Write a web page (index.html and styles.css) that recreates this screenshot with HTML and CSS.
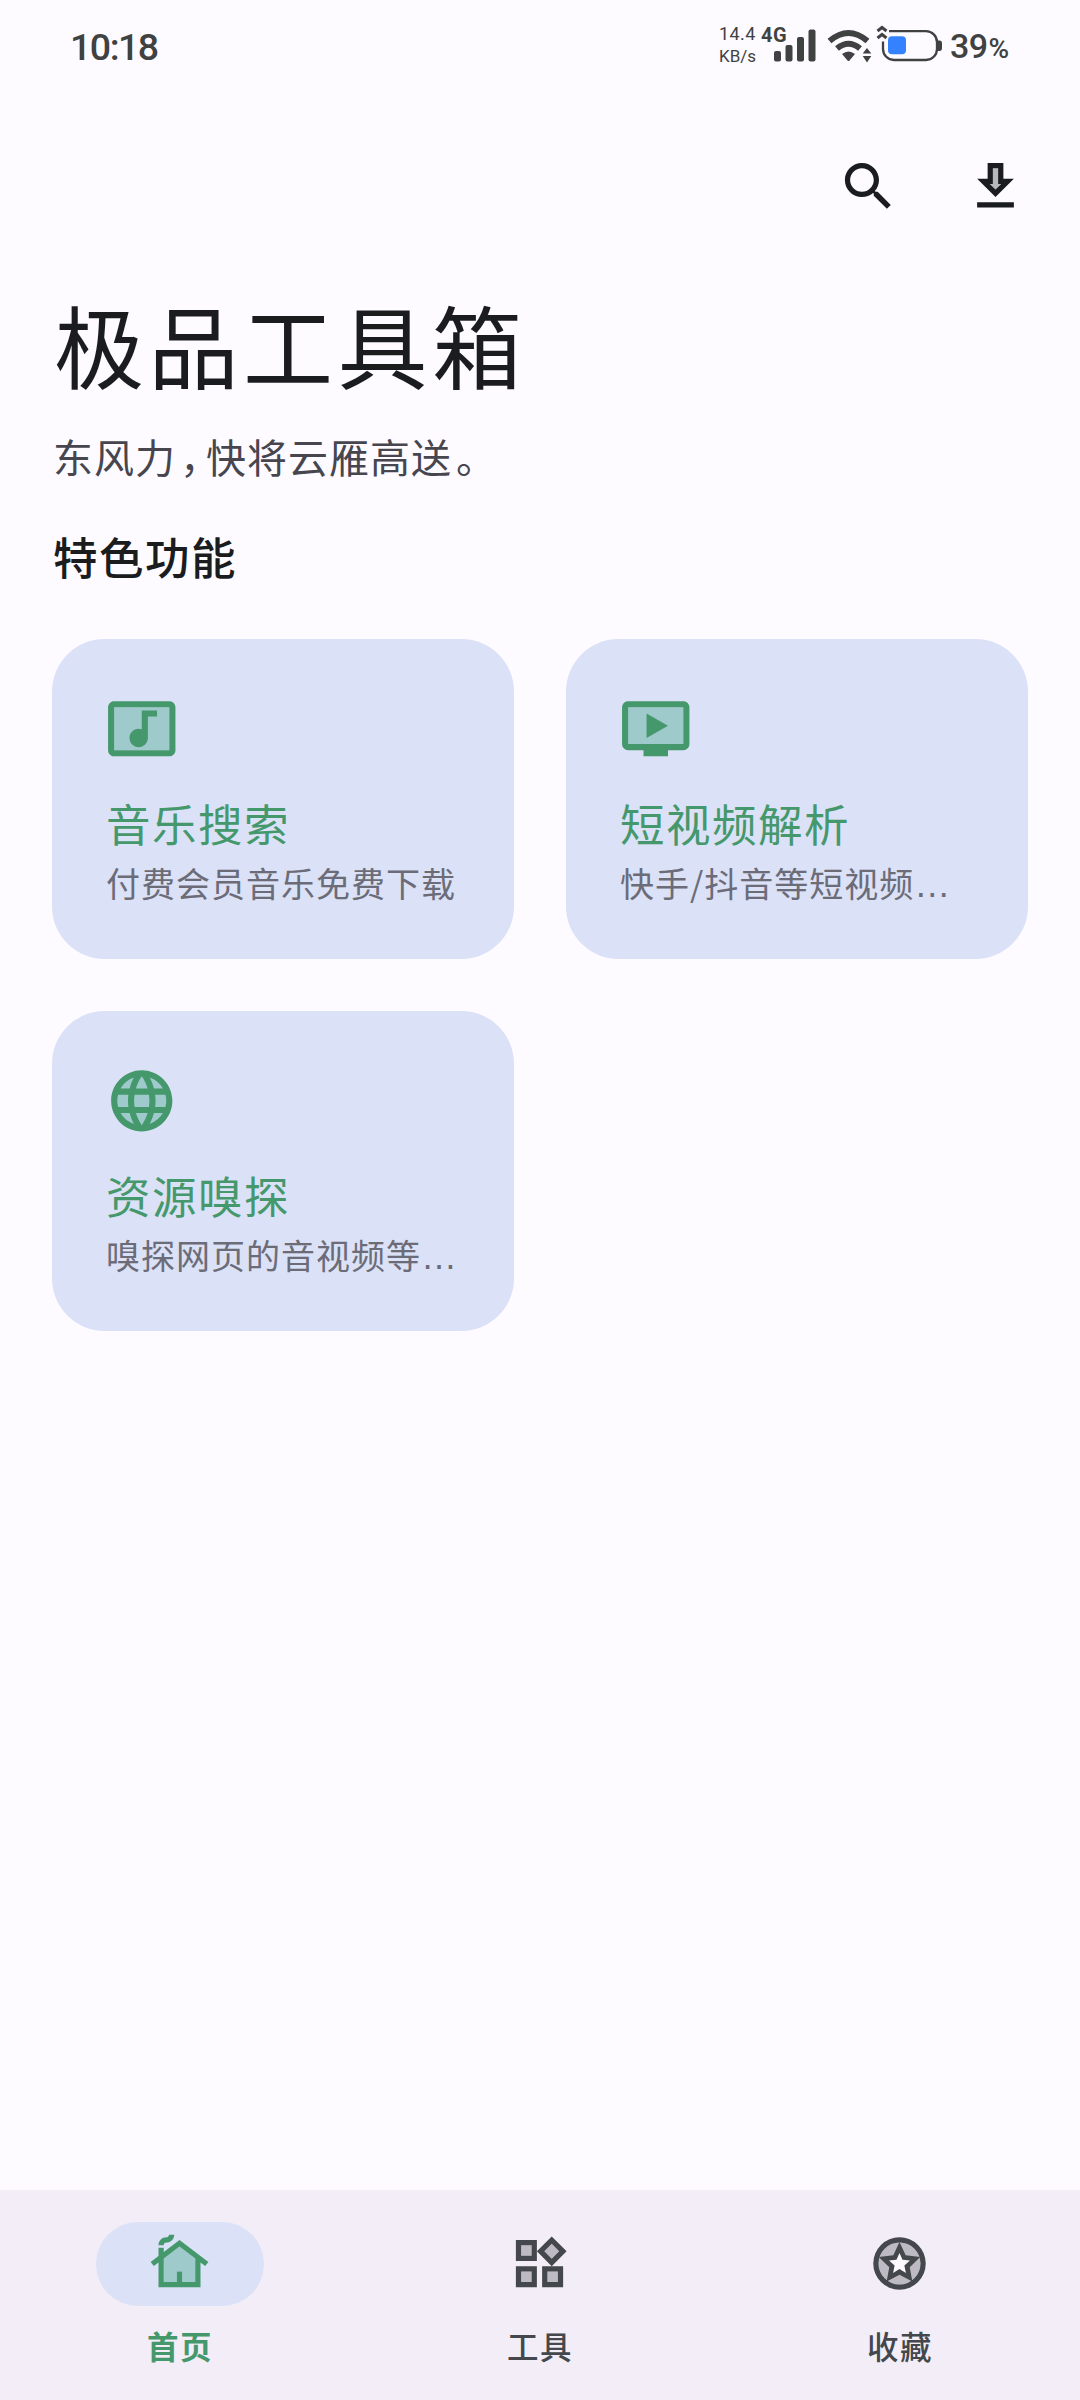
FILE: index.html
```html
<!DOCTYPE html>
<html lang="zh-CN">
<head>
    <meta charset="UTF-8">
    <meta name="viewport" content="width=device-width, initial-scale=1.0">
    <title>极品工具箱</title>
    <link rel="stylesheet" href="styles.css">
</head>
<body>
    <div class="status-bar">
        <div class="time">10:18</div>
        <div class="status-icons">
            <div class="net-speed">
                <span>14.4</span>
                <span class="unit">KB/s</span>
            </div>
            <div class="signal">
                <span class="network">4G</span>
                <svg width="56" height="38" viewBox="0 0 56 38">
                    <rect x="13" y="26" width="7" height="10.5" rx="2"/>
                    <rect x="24.5" y="20" width="7" height="16.5" rx="2"/>
                    <rect x="36" y="12" width="7" height="24.5" rx="2"/>
                    <rect x="47.5" y="4.5" width="7" height="32" rx="2"/>
                </svg>
            </div>
            <svg class="wifi" width="46" height="38" viewBox="0 0 46 38">
                <path class="line" d="M2.5 16Q21.5 0 40.500 16M10 23.500Q21.500 14 33 23.500"/>
                <path d="M15 29Q21.500 24 28 29L22.500 35.500Q21.500 36.500 20.500 35.500z"/>
                <path d="M40 23l4.300 5.500h-8.600zM40 37.500l4.300-6.500h-8.600z"/>
            </svg>
            <svg class="battery" width="68" height="38" viewBox="0 0 68 38">
                <path class="case" d="M14 6.200H51a11 11 0 0 1 11 11V24a11 11 0 0 1-11 11H19A11 11 0 0 1 8 24V16.500"/>
                <rect class="level" x="13" y="11.300" width="18" height="18" rx="4"/>
                <path d="M63 15.500h1.500q2.500 0 2.500 3v4.500q0 3-2.500 3H63z"/>
                <path class="chevron" d="M2.500 6l4.500-3.500L11.500 6M2.500 13l4.500-3.500 4.500 3.500"/>
            </svg>
            <div class="percent">39<small>%</small></div>
        </div>
    </div>

    <div class="toolbar">
        <svg class="icon" viewBox="0 0 24 24">
            <path d="M15.500 14h-.79l-.28-.27C15.410 12.590 16 11.110 16 9.500 16 5.910 13.090 3 9.500 3S3 5.910 3 9.500 5.910 16 9.500 16c1.610 0 3.090-.59 4.230-1.570l.27.28v.79l5 4.990L20.490 19l-4.990-5zm-6 0C7.010 14 5 11.990 5 9.500S7.010 5 9.500 5 14 7.010 14 9.500 11.990 14 9.500 14z"/>
        </svg>
        <svg class="icon" viewBox="0 0 24 24">
            <path class="tone" d="M9.830 11H11V5h2v6h1.170L12 13.170z"/>
            <path d="M19 9h-4V3H9v6H5l7 7 7-7zm-8 2V5h2v6h1.170L12 13.170 9.830 11H11zM5 18h14v2H5z"/>
        </svg>
    </div>

    <main>
        <h1>极品工具箱</h1>
        <p class="subtitle">东风力<span class="comma">，</span>快将云雁高送<span class="stop">。</span></p>
        <h2>特色功能</h2>

        <div class="cards">
            <div class="card">
                <svg viewBox="0 0 24 24">
                    <path class="tone" d="M3 5h18v14H3z"/>
                    <path d="M21 3H3c-1.100 0-2 .9-2 2v14c0 1.100.9 2 2 2h18c1.100 0 2-.9 2-2V5c0-1.100-.9-2-2-2zm0 16H3V5h18v14z"/>
                    <path d="M8 15c0-1.660 1.340-3 3-3 .35 0 .69.07 1 .18V6h5v2h-3v7.030c-.02 1.640-1.350 2.970-3 2.970-1.660 0-3-1.340-3-3z"/>
                </svg>
                <h3>音乐搜索</h3>
                <p>付费会员音乐免费下载</p>
            </div>
            <div class="card">
                <svg viewBox="0 0 24 24">
                    <path class="tone" d="M3 5h18v12H3z"/>
                    <path d="M21 3H3c-1.110 0-2 .89-2 2v12c0 1.100.89 2 2 2h5v2h8v-2h5c1.100 0 1.990-.9 1.990-2L23 5c0-1.110-.9-2-2-2zm0 14H3V5h18v12z"/>
                    <path d="M9 7v8l7-4z"/>
                </svg>
                <h3>短视频解析</h3>
                <p>快手/抖音等短视频<span class="more">…</span></p>
            </div>
            <div class="card">
                <svg viewBox="0 0 24 24">
                    <circle class="tone" cx="12" cy="12" r="9"/>
                    <path d="M11.990 2C6.470 2 2 6.480 2 12s4.470 10 9.990 10C17.520 22 22 17.520 22 12S17.520 2 11.990 2zm6.930 6h-2.950c-.32-1.250-.78-2.450-1.380-3.560 1.840.63 3.370 1.910 4.330 3.560zM12 4.040c.83 1.200 1.480 2.530 1.910 3.960h-3.820c.43-1.430 1.080-2.760 1.910-3.960zM4.260 14C4.100 13.360 4 12.690 4 12s.1-1.360.26-2h3.380c-.08.66-.14 1.320-.14 2s.06 1.340.14 2H4.260zm.82 2h2.950c.32 1.250.78 2.450 1.380 3.560-1.840-.63-3.370-1.900-4.330-3.560zm2.950-8H5.080c.96-1.660 2.490-2.930 4.330-3.560C8.810 5.550 8.350 6.750 8.030 8zM12 19.960c-.83-1.200-1.480-2.530-1.910-3.960h3.820c-.43 1.430-1.080 2.760-1.910 3.960zM14.340 14H9.660c-.09-.66-.16-1.320-.16-2s.07-1.350.16-2h4.680c.09.65.16 1.320.16 2s-.07 1.340-.16 2zm.25 5.560c.6-1.110 1.060-2.310 1.380-3.560h2.950c-.96 1.650-2.490 2.930-4.330 3.560zM16.360 14c.08-.66.14-1.320.14-2s-.06-1.340-.14-2h3.380c.16.64.26 1.310.26 2s-.1 1.360-.26 2h-3.380z"/>
                </svg>
                <h3>资源嗅探</h3>
                <p>嗅探网页的音视频等<span class="more">…</span></p>
            </div>
        </div>
    </main>

    <nav class="bottom-nav">
        <div class="nav-item active">
            <div class="pill">
                <svg class="icon" viewBox="0 0 24 24">
                    <path class="tone" d="M6 10.100V19h5v-4h2v4h5v-8.900l-6-4.580z"/>
                    <path d="M12 3L6 7.580V6H4v3.110L1 11.400l1.210 1.590L4 11.620V21h16v-9.380l1.790 1.360L23 11.400 12 3zm6 16h-5v-4h-2v4H6v-8.900l6-4.580 6 4.580V19zM10 1c0 1.660-1.340 3-3 3-.55 0-1 .45-1 1H4c0-1.660 1.340-3 3-3 .55 0 1-.45 1-1h2z"/>
                </svg>
            </div>
            <span>首页</span>
        </div>
        <div class="nav-item">
            <div class="pill">
                <svg class="icon" viewBox="0 0 24 24">
                    <path class="tone" d="M5 5h4v4H5zM5 15h4v4H5zM15 15h4v4h-4zM16.660 4.520l-2.830 2.820 2.830 2.830 2.830-2.830z"/>
                    <path d="M16.660 1.690L11 7.340 16.660 13l5.660-5.660-5.660-5.650zm-2.830 5.650l2.830-2.830 2.830 2.830-2.830 2.830-2.830-2.830zM3 3v8h8V3H3zm6 6H5V5h4v4zM3 13v8h8v-8H3zm6 6H5v-4h4v4zM13 13v8h8v-8h-8zm6 6h-4v-4h4v4z"/>
                </svg>
            </div>
            <span>工具</span>
        </div>
        <div class="nav-item">
            <div class="pill">
                <svg class="icon" viewBox="0 0 24 24">
                    <circle class="tone" cx="12" cy="12" r="8"/>
                    <path d="M12 2a10 10 0 1 0 0 20 10 10 0 0 0 0-20zm0 18a8 8 0 1 1 0-16 8 8 0 0 1 0 16z"/>
                    <path d="M12 3.800L14.350 8.900 19.900 9.500 15.900 13.400 16.900 18.900 12 16.300 7.100 18.900 8.100 13.400 4.100 9.500 9.650 8.900z"/>
                    <path class="hole" d="M12 8l1.150 2.600 2.850.25-2.150 1.900.6 2.850L12 14.100l-2.450 1.500.6-2.850L8 10.850l2.850-.25z"/>
                </svg>
            </div>
            <span>收藏</span>
        </div>
    </nav>
</body>
</html>
```
FILE: styles.css
```css
* {
    box-sizing: border-box;
}

body {
    display: flex;
    flex-direction: column;
    height: 2400px;
    margin: 0;
    background-color: #fdfbff;
    color: #1a1c1e;
    font-family: "Noto Sans CJK SC", sans-serif;
}

h1, h2, h3, p {
    margin: 0;
}

svg {
    display: block;
    fill: currentColor;
    flex-shrink: 0;
}

.icon {
    width: 63px;
    height: 63px;
}

.tone {
    opacity: 0.3;
}

/* status bar */
.status-bar {
    display: flex;
    justify-content: space-between;
    height: 94px;
    padding: 0 69px 0 70px;
    color: #404141;
    font-family: Roboto, sans-serif;
}

.time {
    font-size: 37.5px;
    font-weight: 500;
    line-height: 94px;
    letter-spacing: -1.5px;
}

.status-icons {
    display: flex;
    align-items: flex-start;
    padding-top: 25px;
}

.net-speed {
    display: flex;
    flex-direction: column;
    width: 42px;
    margin-top: -3px;
    font-size: 18px;
    line-height: 23px;
    letter-spacing: 0.4px;
}

.net-speed .unit {
    font-size: 17px;
    letter-spacing: 0;
}

.signal {
    position: relative;
    margin-right: 10px;
}

.network {
    position: absolute;
    left: 0;
    top: 0;
    font-size: 20px;
    font-weight: 700;
    line-height: 20px;
    letter-spacing: 0.5px;
}

.wifi .line {
    fill: none;
    stroke: currentColor;
    stroke-width: 6;
}

.battery {
    margin-left: 2px;
}

.battery .case, .battery .chevron {
    fill: none;
    stroke: currentColor;
    stroke-width: 2.3;
}

.battery .chevron {
    stroke-width: 3;
}

.battery .level {
    fill: #3482ff;
}

.percent {
    width: 61px;
    margin-left: 7px;
    font-size: 34px;
    font-weight: 500;
    line-height: 43px;
    letter-spacing: -0.6px;
    white-space: nowrap;
}

.percent small {
    margin-left: 1px;
    font-size: 28px;
}

/* toolbar */
.toolbar {
    display: flex;
    justify-content: flex-end;
    gap: 64px;
    padding: 61px 53px 0 0;
}

main {
    flex: 1;
    padding: 70px 52px 0;
}

h1 {
    padding-left: 2px;
    font-size: 90px;
    font-weight: 400;
    line-height: 110px;
    letter-spacing: 4.5px;
}

.subtitle {
    margin-top: 28px;
    padding-left: 1px;
    color: #47464f;
    font-size: 40px;
    line-height: 60px;
    letter-spacing: 1px;
}

.subtitle .comma {
    margin-left: 4px;
    letter-spacing: -14px;
}

.subtitle .stop {
    margin-left: 4px;
}

h2 {
    margin-top: 40px;
    padding-left: 1px;
    font-size: 44.5px;
    font-weight: 500;
    line-height: 60px;
    letter-spacing: 1.5px;
}

/* feature cards */
.cards {
    display: grid;
    grid-template-columns: 462px 462px;
    grid-auto-rows: 320px;
    gap: 52px;
    margin-top: 53px;
}

.card {
    padding: 52.5px 50px 0 53px;
    border-radius: 52.5px;
    background-color: #dbe1f6;
    color: #45986c;
}

.card svg {
    width: 73.5px;
    height: 73.5px;
}

.card .tone, .active .tone {
    fill: #10946a;
}

.card h3 {
    margin-top: 26px;
    padding-left: 1px;
    font-size: 44.5px;
    font-weight: 400;
    line-height: 64px;
    letter-spacing: 1.5px;
}

.card p {
    margin-top: 3px;
    padding-left: 1px;
    color: #6b6c78;
    font-size: 34px;
    line-height: 50px;
    letter-spacing: 1px;
    white-space: nowrap;
}

.card .more {
    font-family: "Liberation Sans", sans-serif;
    font-size: 36px;
    line-height: 1;
    letter-spacing: 0;
}

/* bottom navigation */
.bottom-nav {
    display: flex;
    height: 210px;
    padding-top: 32px;
    background-color: #f2edf7;
    color: #44474b;
}

.nav-item {
    display: flex;
    flex: 1;
    flex-direction: column;
    align-items: center;
}

.pill {
    display: flex;
    justify-content: center;
    align-items: center;
    width: 168px;
    height: 84px;
    padding: 0 1px 1px 0;
    border-radius: 42px;
}

.nav-item span {
    margin-top: 15px;
    font-size: 31.5px;
    font-weight: 500;
    line-height: 48px;
    letter-spacing: 1.5px;
}

.nav-item .hole {
    fill: #fdfbff;
}

.active {
    color: #45986c;
}

.active span {
    font-weight: 700;
}

.active .pill {
    background-color: #dbe1f6;
}
```
